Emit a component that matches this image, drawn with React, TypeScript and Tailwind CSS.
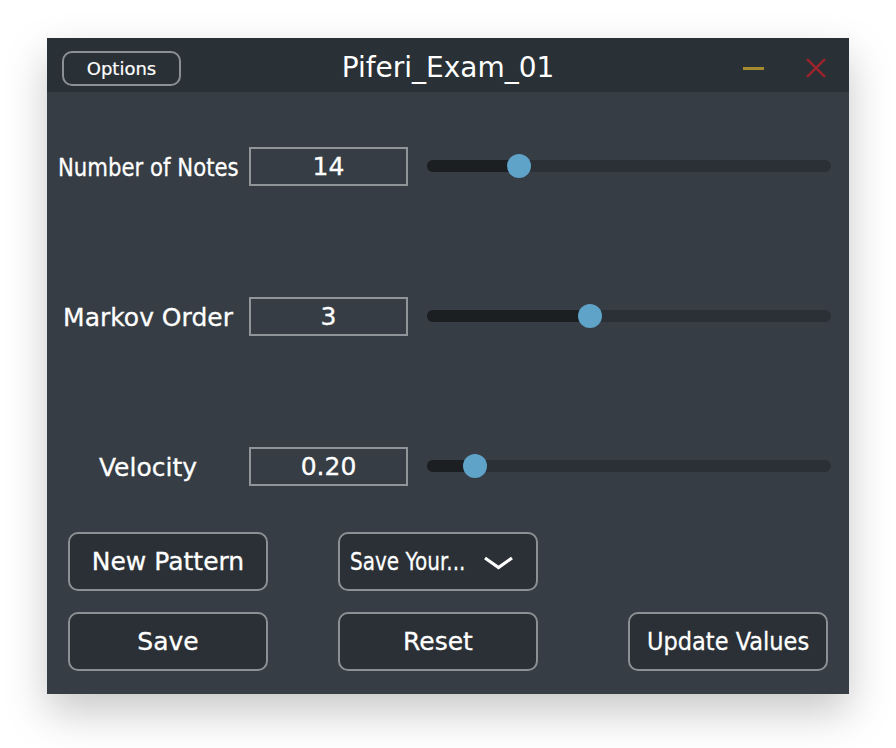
import React from "react";

const font = { fontFamily: '"DejaVu Sans", "Open Sans", sans-serif' };

function Row({ label, value, pct, squeeze }: { label: string; value: string; pct: number; squeeze?: number }) {
  return (
    <div className="flex items-center h-[38px]">
      <div className="w-[180px] flex justify-center ml-[11px] pt-[3px]">
        <span
          className="text-[25px] text-white whitespace-nowrap [-webkit-text-stroke:0.3px_white]"
          style={squeeze ? { transform: `scaleX(${squeeze})`, display: "inline-block" } : undefined}
        >
          {label}
        </span>
      </div>
      <div className="ml-[11px] w-[159px] h-[39px] pt-[2px] border-2 border-[#8f9598] flex items-center justify-center text-[25px] text-white [-webkit-text-stroke:0.3px_white]">
        {value}
      </div>
      <div className="ml-[19px] w-[404px] h-[12px] rounded-full bg-[#2a3036] relative">
        <div className="h-full rounded-full bg-[#1b1f22]" style={{ width: `${pct}%` }} />
        <div
          className="absolute top-1/2 w-[24px] h-[24px] -mt-[12px] -ml-[12px] rounded-full bg-[#5fa3c9]"
          style={{ left: `${pct}%` }}
        />
      </div>
    </div>
  );
}

function Btn({ children, className = "" }: { children: React.ReactNode; className?: string }) {
  return (
    <div
      className={`w-[200px] h-[59px] pt-[1px] rounded-[10px] border-2 border-[#8a9093] bg-[#2a3036] flex items-center justify-center text-[25px] text-white [-webkit-text-stroke:0.3px_white] whitespace-nowrap ${className}`}
    >
      {children}
    </div>
  );
}

export default function App() {
  return (
    <div className="w-[896px] h-[748px] bg-white pt-[38px] pl-[47px]" style={font}>
      <div className="w-[802px] h-[656px] bg-[#363d44] shadow-[0_18px_40px_rgba(0,0,0,0.22)] flex flex-col">
        {/* title bar */}
        <div className="h-[54px] pt-[6px] bg-[#2a3136] flex items-center relative">
          <div className="ml-[15px] w-[119px] h-[35px] rounded-[10px] border-2 border-[#8a9093] flex items-center justify-center text-[18px] text-white [-webkit-text-stroke:0.2px_white]">
            Options
          </div>
          <div className="absolute left-0 right-0 top-[12px] text-center text-[28px] leading-[36px] text-white pointer-events-none">
            Piferi_Exam_01
          </div>
          <div className="ml-auto flex items-center mr-[22px]">
            <div className="w-[21px] h-[3px] bg-[#a68b2e]" />
            <svg width="22" height="22" viewBox="0 0 22 22" className="ml-[41px]">
              <path d="M2 2 L20 20 M20 2 L2 20" stroke="#a3222a" strokeWidth="2.4" />
            </svg>
          </div>
        </div>

        {/* body */}
        <div className="flex flex-col pt-[55px]">
          <Row label="Number of Notes" value="14" pct={22.8} squeeze={0.85} />
          <div className="h-[112px]" />
          <Row label="Markov Order" value="3" pct={40.4} />
          <div className="h-[112px]" />
          <Row label="Velocity" value="0.20" pct={12} />

          <div className="flex mt-[47px] ml-[21px]">
            <Btn>New Pattern</Btn>
            <Btn className="ml-[70px] justify-start pl-[10px] relative">
              <span className="inline-block origin-left" style={{ transform: "scaleX(0.8)" }}>
                Save Your...
              </span>
              <svg width="31" height="14" viewBox="0 0 31 14" className="absolute left-[143px] top-[22px]">
                <path d="M2 2 L15.5 11.5 L29 2" stroke="white" strokeWidth="3.2" fill="none" />
              </svg>
            </Btn>
          </div>
          <div className="flex mt-[21px] ml-[21px]">
            <Btn>Save</Btn>
            <Btn className="ml-[70px]">Reset</Btn>
            <Btn className="ml-[90px]">
              <span className="inline-block" style={{ transform: "scaleX(0.9)" }}>
                Update Values
              </span>
            </Btn>
          </div>
        </div>
      </div>
    </div>
  );
}
